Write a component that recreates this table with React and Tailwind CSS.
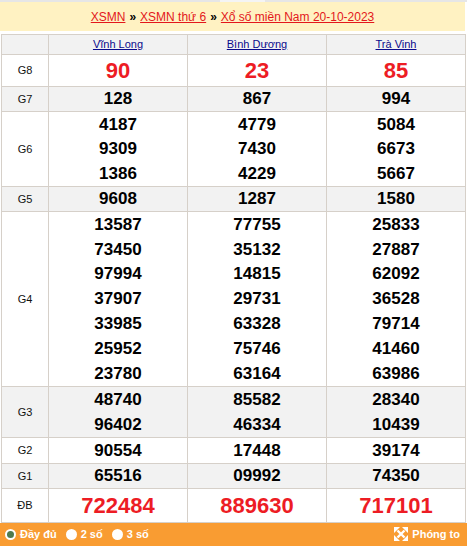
import React from 'react';

const provinces = ['Vĩnh Long', 'Bình Dương', 'Trà Vinh'];

const rows = [
  { label: 'G8', big: true, lh: 31, cols: [['90'], ['23'], ['85']] },
  { label: 'G7', lh: 24, cols: [['128'], ['867'], ['994']] },
  {
    label: 'G6',
    lh: 24.67,
    cols: [
      ['4187', '9309', '1386'],
      ['4779', '7430', '4229'],
      ['5084', '6673', '5667'],
    ],
  },
  { label: 'G5', lh: 24, cols: [['9608'], ['1287'], ['1580']] },
  {
    label: 'G4',
    lh: 24.86,
    cols: [
      ['13587', '73450', '97994', '37907', '33985', '25952', '23780'],
      ['77755', '35132', '14815', '29731', '63328', '75746', '63164'],
      ['25833', '27887', '62092', '36528', '79714', '41460', '63986'],
    ],
  },
  {
    label: 'G3',
    lh: 25,
    cols: [
      ['48740', '96402'],
      ['85582', '46334'],
      ['28340', '10439'],
    ],
  },
  { label: 'G2', lh: 25, cols: [['90554'], ['17448'], ['39174']] },
  { label: 'G1', lh: 24, cols: [['65516'], ['09992'], ['74350']] },
  { label: 'ĐB', big: true, lh: 33, cols: [['722484'], ['889630'], ['717101']] },
];

// four-way diagonal arrows, as on the "Phóng to" button
const ExpandIcon = () => (
  <svg width="14" height="14" viewBox="0 0 14 14">
    <path d="M3.5 3.5 L10.5 10.5 M10.5 3.5 L3.5 10.5" stroke="white" strokeWidth="2.4" />
    <path d="M0 0 H6 L0 6 Z M14 0 V6 L8 0 Z M0 14 V8 L6 14 Z M14 14 H8 L14 8 Z" fill="white" />
  </svg>
);

const Radio = ({ checked }) => (
  <span className="inline-flex items-center justify-center w-[11px] h-[11px] rounded-full bg-white">
    {checked && <span className="w-[7px] h-[7px] rounded-full bg-[#4f7b4f]" />}
  </span>
);

export default function App() {
  return (
    <div className="w-[467px] h-[546px] bg-white overflow-hidden font-['Liberation_Sans',Arial,sans-serif] flex flex-col">
      <div className="h-[2px] shrink-0 bg-[#e6e6e6] flex">
        <div className="w-[220px]" />
        <div className="w-[45px] bg-[#f4f4f4]" />
      </div>
      <div className="h-[29px] shrink-0 w-[465px] bg-[#fff2c2] flex items-center justify-center text-[12px] text-[#e3171b]">
        <a className="underline">XSMN</a>
        <span className="text-black font-bold mx-[4px]">»</span>
        <a className="underline">XSMN thứ 6</a>
        <span className="text-black font-bold mx-[4px]">»</span>
        <a className="underline">Xổ số miền Nam 20-10-2023</a>
      </div>
      <div className="h-[3px] shrink-0" />
      <table className="shrink-0 ml-[1px] w-[464px] table-fixed border-collapse">
        <colgroup>
          <col className="w-[47px]" />
          <col className="w-[139px]" />
          <col className="w-[139px]" />
          <col className="w-[139px]" />
        </colgroup>
        <thead>
          <tr className="bg-[#f2f2f2]">
            <th className="border border-[#d6d0c9] p-0">
              <div className="h-[19px]" />
            </th>
            {provinces.map((p) => (
              <th key={p} className="border border-[#d6d0c9] p-0 text-center font-normal">
                <div className="h-[19px] flex items-center justify-center">
                  <a className="text-[11px] text-[#0a0a8c] underline">{p}</a>
                </div>
              </th>
            ))}
          </tr>
        </thead>
        <tbody>
          {rows.map((r, i) => (
            <tr key={r.label} className={i % 2 === 1 ? 'bg-[#f2f2f2]' : 'bg-white'}>
              <td className="border border-[#d6d0c9] p-0 text-center text-[11px] text-[#111]">{r.label}</td>
              {r.cols.map((c, j) => (
                <td key={j} className="border border-[#d6d0c9] p-0 text-center">
                  {c.map((n, k) => (
                    <div
                      key={k}
                      style={{ height: r.lh }}
                      className={
                        r.big
                          ? 'flex items-center justify-center text-[22px] font-bold text-[#ed1c24]'
                          : 'flex items-center justify-center text-[17px] font-bold text-black'
                      }
                    >
                      {n}
                    </div>
                  ))}
                </td>
              ))}
            </tr>
          ))}
        </tbody>
      </table>
      <div className="flex-1 min-h-0 bg-[#f99c32] flex items-center px-[5px] text-white text-[11px] font-bold">
        <span className="flex items-center gap-[4px]">
          <Radio checked />
          Đầy đủ
        </span>
        <span className="flex items-center gap-[4px] ml-[9px]">
          <Radio />
          2 số
        </span>
        <span className="flex items-center gap-[4px] ml-[9px]">
          <Radio />
          3 số
        </span>
        <span className="ml-auto flex items-center gap-[4px] mr-[2px]">
          <ExpandIcon />
          Phóng to
        </span>
      </div>
    </div>
  );
}
